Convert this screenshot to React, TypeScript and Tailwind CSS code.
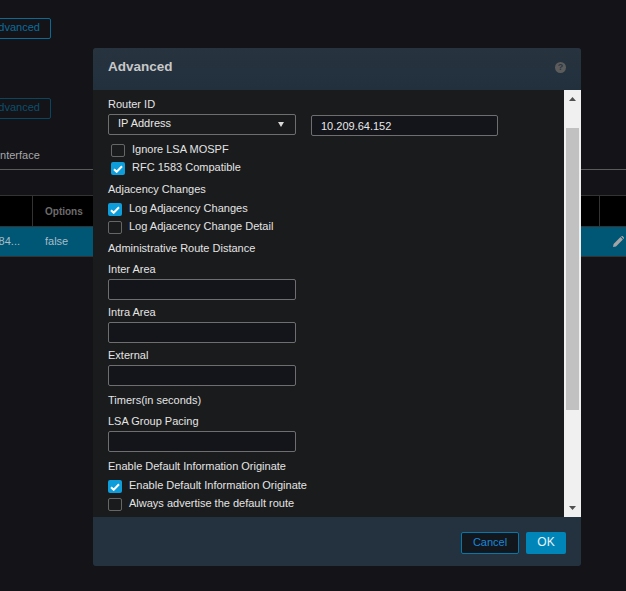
import React from "react";

function Check({ on, className = "" }: { on?: boolean; className?: string }) {
  if (on) {
    return (
      <span className={`flex h-[13px] w-[14px] shrink-0 items-center justify-center rounded-[2px] bg-[#0d9ddb] ${className}`}>
        <svg width="10" height="8" viewBox="0 0 10 8" fill="none">
          <path d="M1 4.2 3.7 6.8 9 1.2" stroke="#fff" strokeWidth="2" />
        </svg>
      </span>
    );
  }
  return <span className={`h-[13px] w-[14px] shrink-0 rounded-[2px] border border-[#666] ${className}`} />;
}

function CheckRow({ label, on, className = "" }: { label: string; on?: boolean; className?: string }) {
  return (
    <div className={`flex h-[13px] items-center gap-[7px] ${className}`}>
      <Check on={on} />
      <span className="-translate-y-px whitespace-nowrap leading-[13px]">{label}</span>
    </div>
  );
}

function Label({ text, className = "" }: { text: string; className?: string }) {
  return <div className={`h-[14px] leading-[14px] ${className}`}>{text}</div>;
}

function Field({ value }: { value?: string }) {
  return (
    <input
      readOnly
      value={value ?? ""}
      className="mt-[3px] block h-[21px] w-[188px] rounded-[2px] border border-[#6e6e6e] bg-[#14151a] px-[9px] text-[#e8e8e8] outline-none"
    />
  );
}

export default function App() {
  return (
    <div className="relative h-[591px] w-[626px] overflow-hidden bg-[#131318] font-['Liberation_Sans',Arial,sans-serif] text-[11px]">
      {/* page behind the dialog */}
      <div className="pt-[18px]">
        <div className="-ml-[20px] flex h-[21px] w-[71px] items-center justify-center rounded-[2px] border border-[#0a6b96] pb-[2px] text-[#0d6c9c]">
          Advanced
        </div>
        <div className="-ml-[20px] mt-[59px] flex h-[21px] w-[71px] items-center justify-center rounded-[2px] border border-[#0b4660] pb-[2px] text-[#0c4f6c]">
          Advanced
        </div>
        <div className="-ml-[3px] mt-[29px] h-[14px] leading-[14px] text-[#a8a8a8]">Interface</div>
        <div className="mt-[7px] h-px bg-[#5a5a5a]" />
        <div className="mt-[25px] grid grid-cols-[33px_1fr_26px] border-t border-[#333]">
          <div className="h-[30px] border-r border-[#333] bg-black" />
          <div className="flex h-[30px] items-center border-r border-[#333] bg-black pl-[12px] text-[10px] font-bold text-[#6c6c6c]">
            Options
          </div>
          <div className="h-[30px] bg-black" />
          <div className="flex h-[31px] items-center justify-end border-y border-y-[#333] bg-[#005675] pr-[13px] text-[#a9bdc7]">
            84...
          </div>
          <div className="flex h-[31px] items-center border-y border-y-[#333] bg-[#005675] pl-[12px] text-[#a9bdc7]">
            false
          </div>
          <div className="flex h-[31px] items-center border-y border-y-[#333] bg-[#005675] pl-[13px]">
            <svg width="11" height="11" viewBox="0 0 11 11" fill="#a4a4a4">
              <path d="M0 11 .6 8 7.5 1.1 9.9 3.5 3 10.4ZM8.1.5 8.6 0a.7.7 0 0 1 1 0L11 1.4a.7.7 0 0 1 0 1L10.5 2.9Z" />
            </svg>
          </div>
        </div>
      </div>

      {/* dialog */}
      <div className="absolute left-[93px] top-[48px] flex h-[518px] w-[488px] flex-col overflow-hidden rounded-[3px] bg-[#1a1b1d] text-[#e4e4e4]">
        <div className="flex h-[42px] shrink-0 items-center justify-between bg-gradient-to-b from-[#27343f] to-[#222f3d] px-[15px] pb-[3px]">
          <span className="text-[13.5px] font-bold text-[#c8c8c8]">Advanced</span>
          <span className="flex h-[11px] w-[11px] items-center justify-center rounded-full bg-[#5c5c5c] text-[9px] font-bold leading-none text-[#2a3642]">
            ?
          </span>
        </div>

        <div className="flex min-h-0 flex-1">
          <div className="flex-1 pl-[15px] pt-[7px]">
            <Label text="Router ID" />
            <div className="mt-[3px] flex h-[21px] items-start gap-[15px]">
              <div className="flex h-[21px] w-[188px] items-center justify-between rounded-[2px] border border-[#6e6e6e] pl-[9px] pr-[11px] text-[#e8e8e8]">
                <span className="-translate-y-px">IP Address</span>
                <svg width="6" height="5" viewBox="0 0 6 5" fill="#d8d8d8">
                  <path d="M0 0h6L3 5Z" />
                </svg>
              </div>
              <input
                readOnly
                value="10.209.64.152"
                className="mt-px block h-[21px] w-[187px] rounded-[2px] border border-[#6e6e6e] bg-[#14151a] px-[9px] text-[#e8e8e8] outline-none"
              />
            </div>
            <CheckRow label="Ignore LSA MOSPF" className="ml-[3px] mt-[9px]" />
            <CheckRow label="RFC 1583 Compatible" on className="ml-[3px] mt-[5px]" />
            <Label text="Adjacency Changes" className="mt-[7px]" />
            <CheckRow label="Log Adjacency Changes" on className="mt-[7px]" />
            <CheckRow label="Log Adjacency Change Detail" className="mt-[5px]" />
            <Label text="Administrative Route Distance" className="mt-[7px]" />
            <Label text="Inter Area" className="mt-[7px]" />
            <Field />
            <Label text="Intra Area" className="mt-[5px]" />
            <Field />
            <Label text="External" className="mt-[5px]" />
            <Field />
            <Label text="Timers(in seconds)" className="mt-[7px]" />
            <Label text="LSA Group Pacing" className="mt-[7px]" />
            <Field />
            <Label text="Enable Default Information Originate" className="mt-[7px]" />
            <CheckRow label="Enable Default Information Originate" on className="mt-[7px]" />
            <CheckRow label="Always advertise the default route" className="mt-[5px]" />
          </div>

          {/* scrollbar */}
          <div className="flex w-[17px] shrink-0 flex-col items-center bg-[#f0f0f0]">
            <div className="flex h-[38px] w-full shrink-0 items-start justify-center pt-[7px]">
              <svg width="7" height="4" viewBox="0 0 7 4" fill="#505050">
                <path d="M0 4h7L3.5 0Z" />
              </svg>
            </div>
            <div className="h-[282px] w-[13px] shrink-0 bg-[#c1c1c1]" />
            <div className="flex w-full flex-1 items-end justify-center pb-[7px]">
              <svg width="7" height="4" viewBox="0 0 7 4" fill="#505050">
                <path d="M0 0h7L3.5 4Z" />
              </svg>
            </div>
          </div>
        </div>

        <div className="flex h-[49px] shrink-0 items-start justify-end gap-[7px] bg-[#243240] pr-[15px] pt-[15px]">
          <button className="h-[22px] w-[58px] rounded-[2px] border border-[#0578ab] bg-[#11171d] pb-[2px] text-[#1a87d8]">
            Cancel
          </button>
          <button className="h-[22px] w-[40px] rounded-[2px] bg-[#0085b8] pb-[2px] text-[12px] text-[#e8f4f8]">OK</button>
        </div>
      </div>
    </div>
  );
}
